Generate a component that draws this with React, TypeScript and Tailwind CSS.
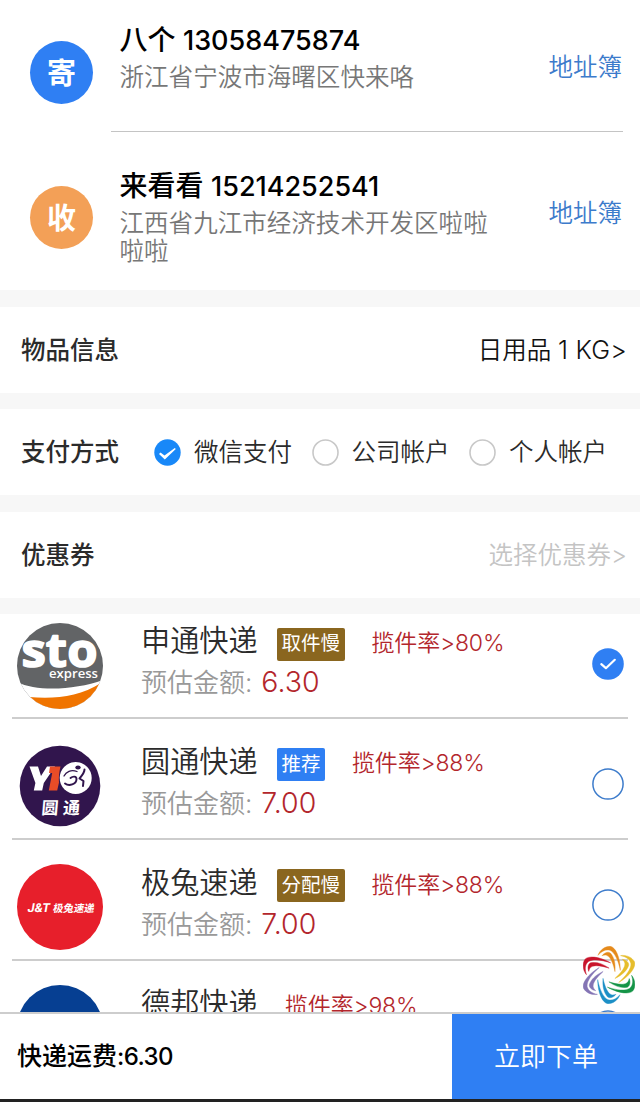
import React, { useState } from "react";

type Party = { mark: string; color: string; name: string; phone: string; address: string };

const parties: Party[] = [
  { mark: "寄", color: "bg-[#2f7ff3]", name: "八个", phone: "13058475874", address: "浙江省宁波市海曙区快来咯" },
  { mark: "收", color: "bg-[#f3a057]", name: "来看看", phone: "15214252541", address: "江西省九江市经济技术开发区啦啦啦啦" },
];

function StoLogo() {
  return (
    <svg viewBox="0 0 86 86" className="size-full">
      <defs>
        <clipPath id="sto-clip">
          <circle cx="43" cy="43" r="43" />
        </clipPath>
      </defs>
      <g clipPath="url(#sto-clip)">
        <rect width="86" height="86" fill="#626466" />
        <path d="M0 59 C20 69 58 67 86 57 V86 H0Z" fill="#fff" />
        <path d="M12 74 C38 76 62 74 84 60 V86 H12Z" fill="#f07400" />
      </g>
      <text x="4.5" y="43.5" textLength="76" lengthAdjust="spacingAndGlyphs" fontSize="47" className="font-['Open_Sans',sans-serif] font-bold" fill="#fff" stroke="#fff" strokeWidth="1.6" strokeLinejoin="round">sto</text>
      <text x="32" y="55" textLength="49" lengthAdjust="spacingAndGlyphs" fontSize="13" className="font-['Open_Sans',sans-serif] font-semibold" fill="#fff">express</text>
    </svg>
  );
}

function YtoLogo() {
  return (
    <svg viewBox="0 0 86 86" className="size-full">
      <circle cx="43" cy="43" r="40.3" fill="#31154d" />
      <path d="M12.5 23.5 H21 L24 33 L30 23.5 H38 L26.8 40 L25.2 47.5 H16.8 L18.4 40Z" fill="#fff" />
      <path d="M33 23.5 H43.5 C42 29.5 41.5 35.5 42 39.5 L40.2 47.5 H31.8 L35.2 30 H32Z" fill="#e84c27" />
      <circle cx="58.7" cy="35" r="16" fill="#fff" />
      <g fill="none" stroke="#31154d" strokeLinecap="round" strokeLinejoin="round">
        <path d="M60 28.5 C54 26 49 29 47 33" strokeWidth="1.3" />
        <path d="M48 40.5 C52 43.5 59.5 41.5 59.5 36 C59.5 33 56 33 53.5 35" strokeWidth="1.9" />
        <path d="M67.5 26.5 C67.5 29.5 66 31.5 62.5 35.5 L66.5 38 L66 43" strokeWidth="2" />
      </g>
      <ellipse cx="61" cy="24.6" rx="2.7" ry="2" fill="#31154d" />
      <g transform="translate(0 70.5) skewX(-5)">
        <text x="24" y="0" fontSize="17" textLength="38.5" className="font-['Noto_Sans_CJK_SC',sans-serif] font-bold" fill="#fff">圆通</text>
      </g>
    </svg>
  );
}

function JtLogo() {
  return (
    <svg viewBox="0 0 86 86" className="size-full">
      <circle cx="43" cy="43" r="43" fill="#e71f2b" />
      <g fill="#fff" transform="translate(0 47.5) skewX(-10)">
        <text x="10" y="0" fontSize="12" textLength="22.5" lengthAdjust="spacingAndGlyphs" className="font-['Inter',sans-serif] font-bold">J&amp;T</text>
        <text x="35.5" y="0" fontSize="10.4" textLength="41.5" className="font-['Noto_Sans_CJK_SC',sans-serif] font-bold">极兔速递</text>
      </g>
    </svg>
  );
}

function DebangLogo() {
  return (
    <svg viewBox="0 0 86 86" className="size-full">
      <circle cx="43" cy="43" r="43" fill="#063f92" />
    </svg>
  );
}

type Courier = {
  name: string;
  logo: () => React.JSX.Element;
  tag?: string;
  tagColor?: string;
  rate: string;
  price: string;
};

const couriers: Courier[] = [
  { name: "申通快递", logo: StoLogo, tag: "取件慢", tagColor: "bg-[#8a661f]", rate: "80%", price: "6.30" },
  { name: "圆通快递", logo: YtoLogo, tag: "推荐", tagColor: "bg-[#2f7ff3]", rate: "88%", price: "7.00" },
  { name: "极兔速递", logo: JtLogo, tag: "分配慢", tagColor: "bg-[#8a661f]", rate: "88%", price: "7.00" },
  { name: "德邦快递", logo: DebangLogo, rate: "98%", price: "8.00" },
];

const petals = ["#e58a1c", "#e6bd2c", "#149447", "#1c8fc6", "#8474b4", "#c9142c"];

function FloatingFlower() {
  return (
    <svg viewBox="-78 -87 156 174" className="absolute left-[583px] top-[945.5px] h-[58px] w-[52px]">
      {petals.map((color, i) => (
        <g key={color} transform={`rotate(${i * 60})`} fill={color} stroke={color} strokeWidth="1.2" strokeLinejoin="round">
          <path d="M-33 -59 C-28 -74 -12 -87 4 -86 C19 -84 34 -54 34 -14 C28 -44 17 -68 3 -74 C-9 -78 -22 -72 -33 -59Z" />
          <path d="M-21 -58 C-14 -67 -3 -71 4 -66 C15 -54 20 -36 18 -10 C13 -32 7 -48 -2 -56 C-8 -61 -14 -60 -21 -58Z" />
        </g>
      ))}
    </svg>
  );
}

function PayRadio({ on }: { on: boolean }) {
  return (
    <svg viewBox="0 0 27 27" className="size-[27px] shrink-0">
      {on ? (
        <>
          <circle cx="13.5" cy="13.5" r="13.2" fill="#1888f8" />
          <path d="M5 15 L6.5 13.6 L10.5 16.6 L20.8 9 L21.8 10 L10.8 20.6Z" fill="#fff" />
        </>
      ) : (
        <circle cx="13.5" cy="13.5" r="12.5" fill="#fff" stroke="#c8c8c8" strokeWidth="1.6" />
      )}
    </svg>
  );
}

function CourierRadio({ on }: { on: boolean }) {
  return (
    <svg viewBox="0 0 32 32" className="size-8 shrink-0">
      {on ? (
        <>
          <circle cx="16" cy="16" r="15.8" fill="#2f7ff3" />
          <path d="M9.3 16.2 L13.9 20.2 L22.8 11.8" fill="none" stroke="#fff" strokeWidth="2.2" strokeLinecap="round" strokeLinejoin="round" />
        </>
      ) : (
        <circle cx="16" cy="16" r="15.1" fill="#fff" stroke="#3c7bcb" strokeWidth="1.5" />
      )}
    </svg>
  );
}

export default function App() {
  const [pay, setPay] = useState(0);
  const [selected, setSelected] = useState(0);
  return (
    <div className="relative flex h-[1102px] w-[640px] flex-col overflow-hidden bg-[#f7f7f7] font-['Inter','Noto_Sans_CJK_SC',sans-serif] font-[350] text-[#2b2b2b] [font-feature-settings:'calt'_0]">
      <main className="flex min-h-0 flex-1 flex-col gap-[17px] overflow-hidden">
        <section className="h-[290px] shrink-0 bg-white">
          {parties.map((p, i) => (
            <div key={p.mark} className="flex h-[145.5px] pl-[30px]">
              <div className={`mt-[40.5px] flex size-[63px] shrink-0 items-center justify-center rounded-full pt-[3px] text-[29px] font-bold text-white ${p.color}`}>
                {p.mark}
              </div>
              <div className={`ml-[18px] flex h-[132px] w-[512px] justify-between pl-[8.5px] pr-px pt-[23px] ${i === 0 ? "border-b-[1.5px] border-[#c4c4c4]" : ""}`}>
                <div className="w-[373px]">
                  <div className="text-[28px] font-medium leading-[34px] text-black">
                    {p.name} <span className="text-[27px]">{p.phone}</span>
                  </div>
                  <div className="mt-[5px] text-[24.55px] leading-[28px] text-[#777]">{p.address}</div>
                </div>
                <button className="mt-[28px] h-8 text-[24.5px] leading-[32px] text-[#3c7bcb]">地址簿</button>
              </div>
            </div>
          ))}
        </section>

        <section className="flex h-[86px] shrink-0 items-center justify-between bg-white pl-[21px] pr-[13px] text-[24.5px]">
          <h2 className="font-medium">物品信息</h2>
          <span className="text-[#111]">
            日用品 <span className="text-[25.3px] tracking-[0.2px]">1 KG&gt;</span>
          </span>
        </section>

        <section className="-mt-px flex h-[86px] shrink-0 items-center bg-white pl-[21px] text-[24.5px]">
          <h2 className="w-[133px] font-medium">支付方式</h2>
          {["微信支付", "公司帐户", "个人帐户"].map((label, i) => (
            <button key={label} onClick={() => setPay(i)} className="flex w-[157.5px] items-center gap-[13px]">
              <PayRadio on={pay === i} />
              <span className="whitespace-nowrap">{label}</span>
            </button>
          ))}
        </section>

        <section className="flex h-[86px] shrink-0 items-center justify-between bg-white pl-[21px] pr-[13px] text-[24.5px]">
          <h2 className="font-medium">优惠券</h2>
          <span className="text-[#c4c4c4]">选择优惠券&gt;</span>
        </section>

        <section className="-mt-px shrink-0 bg-white px-3">
          {couriers.map((c, i) => (
            <div
              key={c.name}
              onClick={() => setSelected(i)}
              className="flex h-[121.2px] items-start border-b-2 border-[#cdcdcd] pl-[5px] pr-[4px] pt-[24.5px] first:h-[104.6px] first:pt-[8.5px]"
            >
              <div className="size-[86px] shrink-0">
                <c.logo />
              </div>
              <div className="ml-[38px] min-w-0 flex-1">
                <div className="flex h-[38px] items-center">
                  <span className="-mt-px w-[117px] whitespace-nowrap text-[29.2px]">{c.name}</span>
                  {c.tag && (
                    <span className={`ml-[19px] mt-[5px] flex h-[33px] items-center rounded-[2px] px-[4.5px] text-[19.5px] font-normal text-white ${c.tagColor}`}>
                      {c.tag}
                    </span>
                  )}
                  <span className="ml-[27px] mt-[3px] text-[23px] tracking-[-0.15px] text-[#b3262c]">揽件率&gt;{c.rate}</span>
                </div>
                <div className="flex h-[44px] items-center text-[26px] text-[#999]">
                  预估金额:
                  <span className="ml-[9px] text-[28.5px] text-[#b3262c]">{c.price}</span>
                </div>
              </div>
              <div className="mt-[25px]">
                <CourierRadio on={selected === i} />
              </div>
            </div>
          ))}
        </section>
      </main>

      <FloatingFlower />

      <footer className="flex h-[90px] shrink-0 border-b-[3px] border-t-2 border-b-[#222] border-t-[#cdcdcd] bg-white">
        <div className="flex flex-1 items-center pl-[17px] text-[25px] font-medium text-black">
          快递运费<span className="text-[24px] tracking-[-0.6px]">:6.30</span>
        </div>
        <button className="w-[188px] bg-[#2f7ff3] text-[26px] text-white">立即下单</button>
      </footer>
    </div>
  );
}
